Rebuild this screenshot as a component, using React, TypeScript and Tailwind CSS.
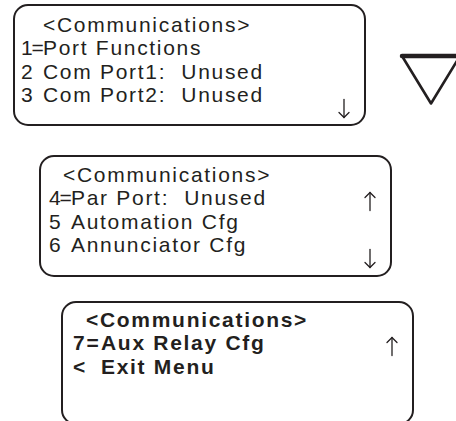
import React from 'react';

type Line = { pre?: string; text: string; indent?: number; arrow?: 'up' | 'down' };

function Arrow({ dir }: { dir: 'up' | 'down' }) {
  return (
    <svg
      width="12"
      height="21"
      viewBox="0 0 12 21"
      className={'shrink-0 ' + (dir === 'down' ? 'mt-[15px]' : 'mt-[5px]')}
    >
      <g fill="none" stroke="#231f20" strokeWidth="1.3" strokeLinecap="round" strokeLinejoin="round">
        <line x1="6" y1="1.5" x2="6" y2="19.5" />
        {dir === 'down' ? (
          <polyline points="1,14.5 6,19.5 11,14.5" />
        ) : (
          <polyline points="1,6.5 6,1.5 11,6.5" />
        )}
      </g>
    </svg>
  );
}

function Display({
  lines,
  bold,
  className,
  preClass,
}: {
  lines: Line[];
  bold?: boolean;
  className: string;
  preClass: string;
}) {
  return (
    <div
      className={
        'w-[353px] shrink-0 rounded-[15px] border-2 border-[#231f20] bg-white pr-[14px] ' +
        className +
        (bold ? ' font-bold' : '')
      }
    >
      {lines.map((l, i) => (
        <div key={i} className="flex h-[23.4px] items-start justify-between">
          <div className="flex whitespace-pre">
            {l.pre !== undefined ? <span className={'shrink-0 ' + preClass}>{l.pre}</span> : null}
            <span style={l.indent ? { paddingLeft: l.indent } : undefined}>{l.text}</span>
          </div>
          {l.arrow && <Arrow dir={l.arrow} />}
        </div>
      ))}
    </div>
  );
}

function DownTriangle() {
  return (
    <svg width="64" height="56" viewBox="0 0 64 56" className="mt-[47px] shrink-0">
      <path d="M3 5 L61 5 L32 52.5 Z" fill="none" stroke="#231f20" strokeWidth="2.6" strokeLinejoin="round" />
      <line x1="3" y1="5" x2="61" y2="5" stroke="#231f20" strokeWidth="4.5" strokeLinecap="round" />
    </svg>
  );
}

export default function App() {
  return (
    <div
      className="h-[421px] w-[456px] overflow-hidden bg-white text-[21px] leading-[23.4px] tracking-[1.7px] text-[#231f20]"
      style={{ fontFamily: '"Liberation Sans", Arial, sans-serif' }}
    >
      <div className="flex items-start gap-[33px] pl-[13px] pt-[4px]">
        <Display
          className="h-[122px] pl-[6px] pt-[7px]"
          preClass="w-[22px] tracking-[-1.2px]"
          lines={[
            { text: '<Communications>', indent: 22 },
            { pre: '1=', text: 'Port Functions' },
            { pre: '2', text: 'Com Port1:  Unused' },
            { pre: '3', text: 'Com Port2:  Unused', arrow: 'down' },
          ]}
        />
        <DownTriangle />
      </div>
      <div className="pl-[39px] pt-[29px]">
        <Display
          className="h-[122px] pl-[8px] pt-[6px]"
          preClass="w-[22px] tracking-[-1.2px]"
          lines={[
            { text: '<Communications>', indent: 14 },
            { pre: '4=', text: 'Par Port:  Unused', arrow: 'up' },
            { pre: '5', text: 'Automation Cfg' },
            { pre: '6', text: 'Annunciator Cfg', arrow: 'down' },
          ]}
        />
      </div>
      <div className="pl-[61px] pt-[24px]">
        <Display
          bold
          className="h-[124px] pl-[10px] pt-[5px]"
          preClass="w-[28px]"
          lines={[
            { text: '<Communications>', indent: 13 },
            { pre: '7=', text: 'Aux Relay Cfg', arrow: 'up' },
            { pre: '<', text: 'Exit Menu' },
          ]}
        />
      </div>
    </div>
  );
}
